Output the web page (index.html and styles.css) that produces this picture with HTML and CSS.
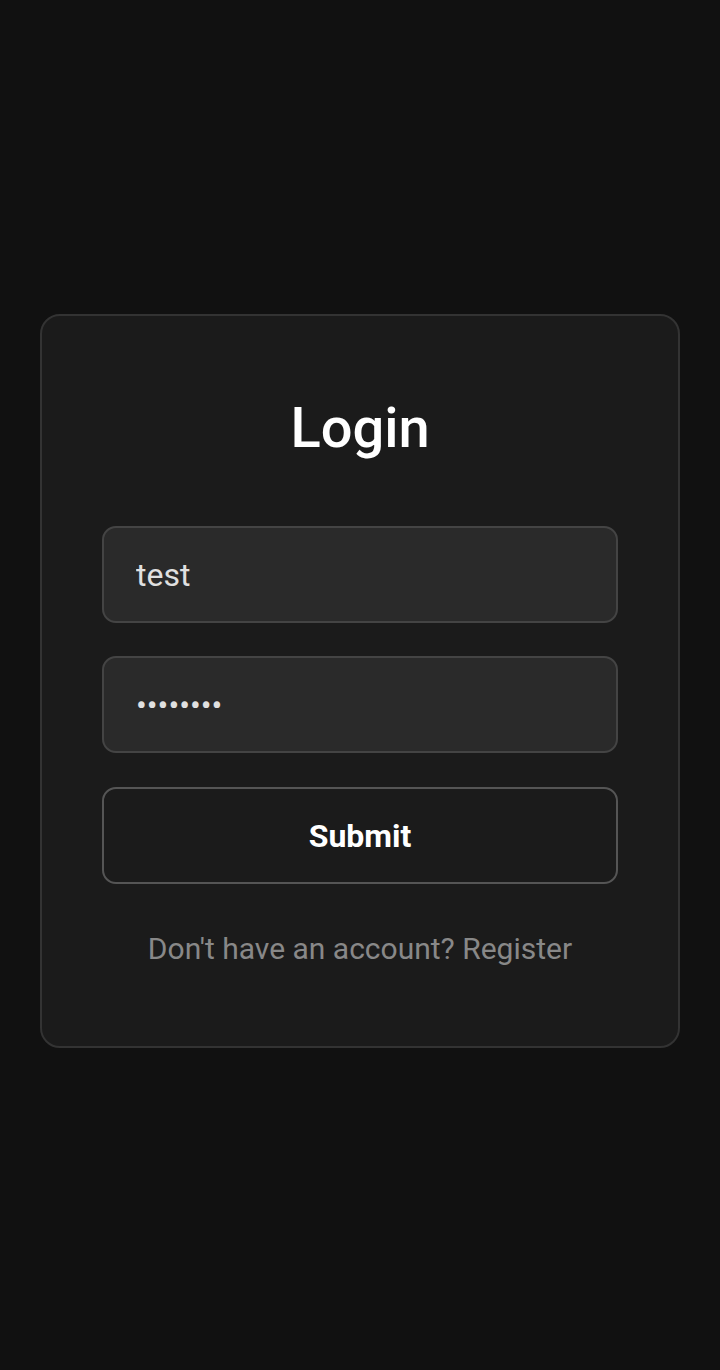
FILE: index.html
```html
<!DOCTYPE html>
<html lang="en">
<head>
<meta charset="utf-8">
<title>Login</title>
<link rel="stylesheet" href="styles.css">
</head>
<body>
<main class="page">
  <form class="card">
    <h1 class="title">Login</h1>
    <input class="field" type="text" value="test">
    <input class="field" type="password" value="12345678">
    <button class="submit" type="button">Submit</button>
    <p class="footer">Don't have an account? Register</p>
  </form>
</main>
</body>
</html>
```

FILE: styles.css
```css
html, body {
  margin: 0;
  padding: 0;
  background: #111111;
}
body {
  font-family: Roboto, "Liberation Sans", sans-serif;
  min-height: 1370px;
}
.page {
  padding-top: 314px;
  display: flex;
  justify-content: center;
}
.card {
  box-sizing: border-box;
  width: 640px;
  background: #1b1b1b;
  border: 2px solid #333333;
  border-radius: 20px;
  padding: 80px 60px;
  display: flex;
  flex-direction: column;
}
.title {
  margin: 0 0 65px;
  font-size: 56px;
  line-height: 65px;
  font-weight: 500;
  color: #ffffff;
  text-align: center;
}
.field {
  box-sizing: border-box;
  height: 97px;
  width: 100%;
  margin: 0 0 33px;
  padding: 0 32px;
  background: #2a2a2a;
  border: 2px solid #444444;
  border-radius: 14px;
  color: #e0e0e0;
  font-family: Roboto, "Liberation Sans", sans-serif;
  font-size: 32px;
  outline: none;
}
.field + .submit {
  margin-top: 1px;
}
.submit {
  box-sizing: border-box;
  height: 97px;
  width: 100%;
  background: #1b1b1b;
  border: 2px solid #555555;
  border-radius: 14px;
  color: #ffffff;
  font-family: Roboto, "Liberation Sans", sans-serif;
  font-size: 32px;
  font-weight: 700;
  cursor: pointer;
}
.footer {
  margin: 47px 0 0;
  font-size: 30px;
  line-height: 35px;
  color: #888888;
  text-align: center;
}
```
